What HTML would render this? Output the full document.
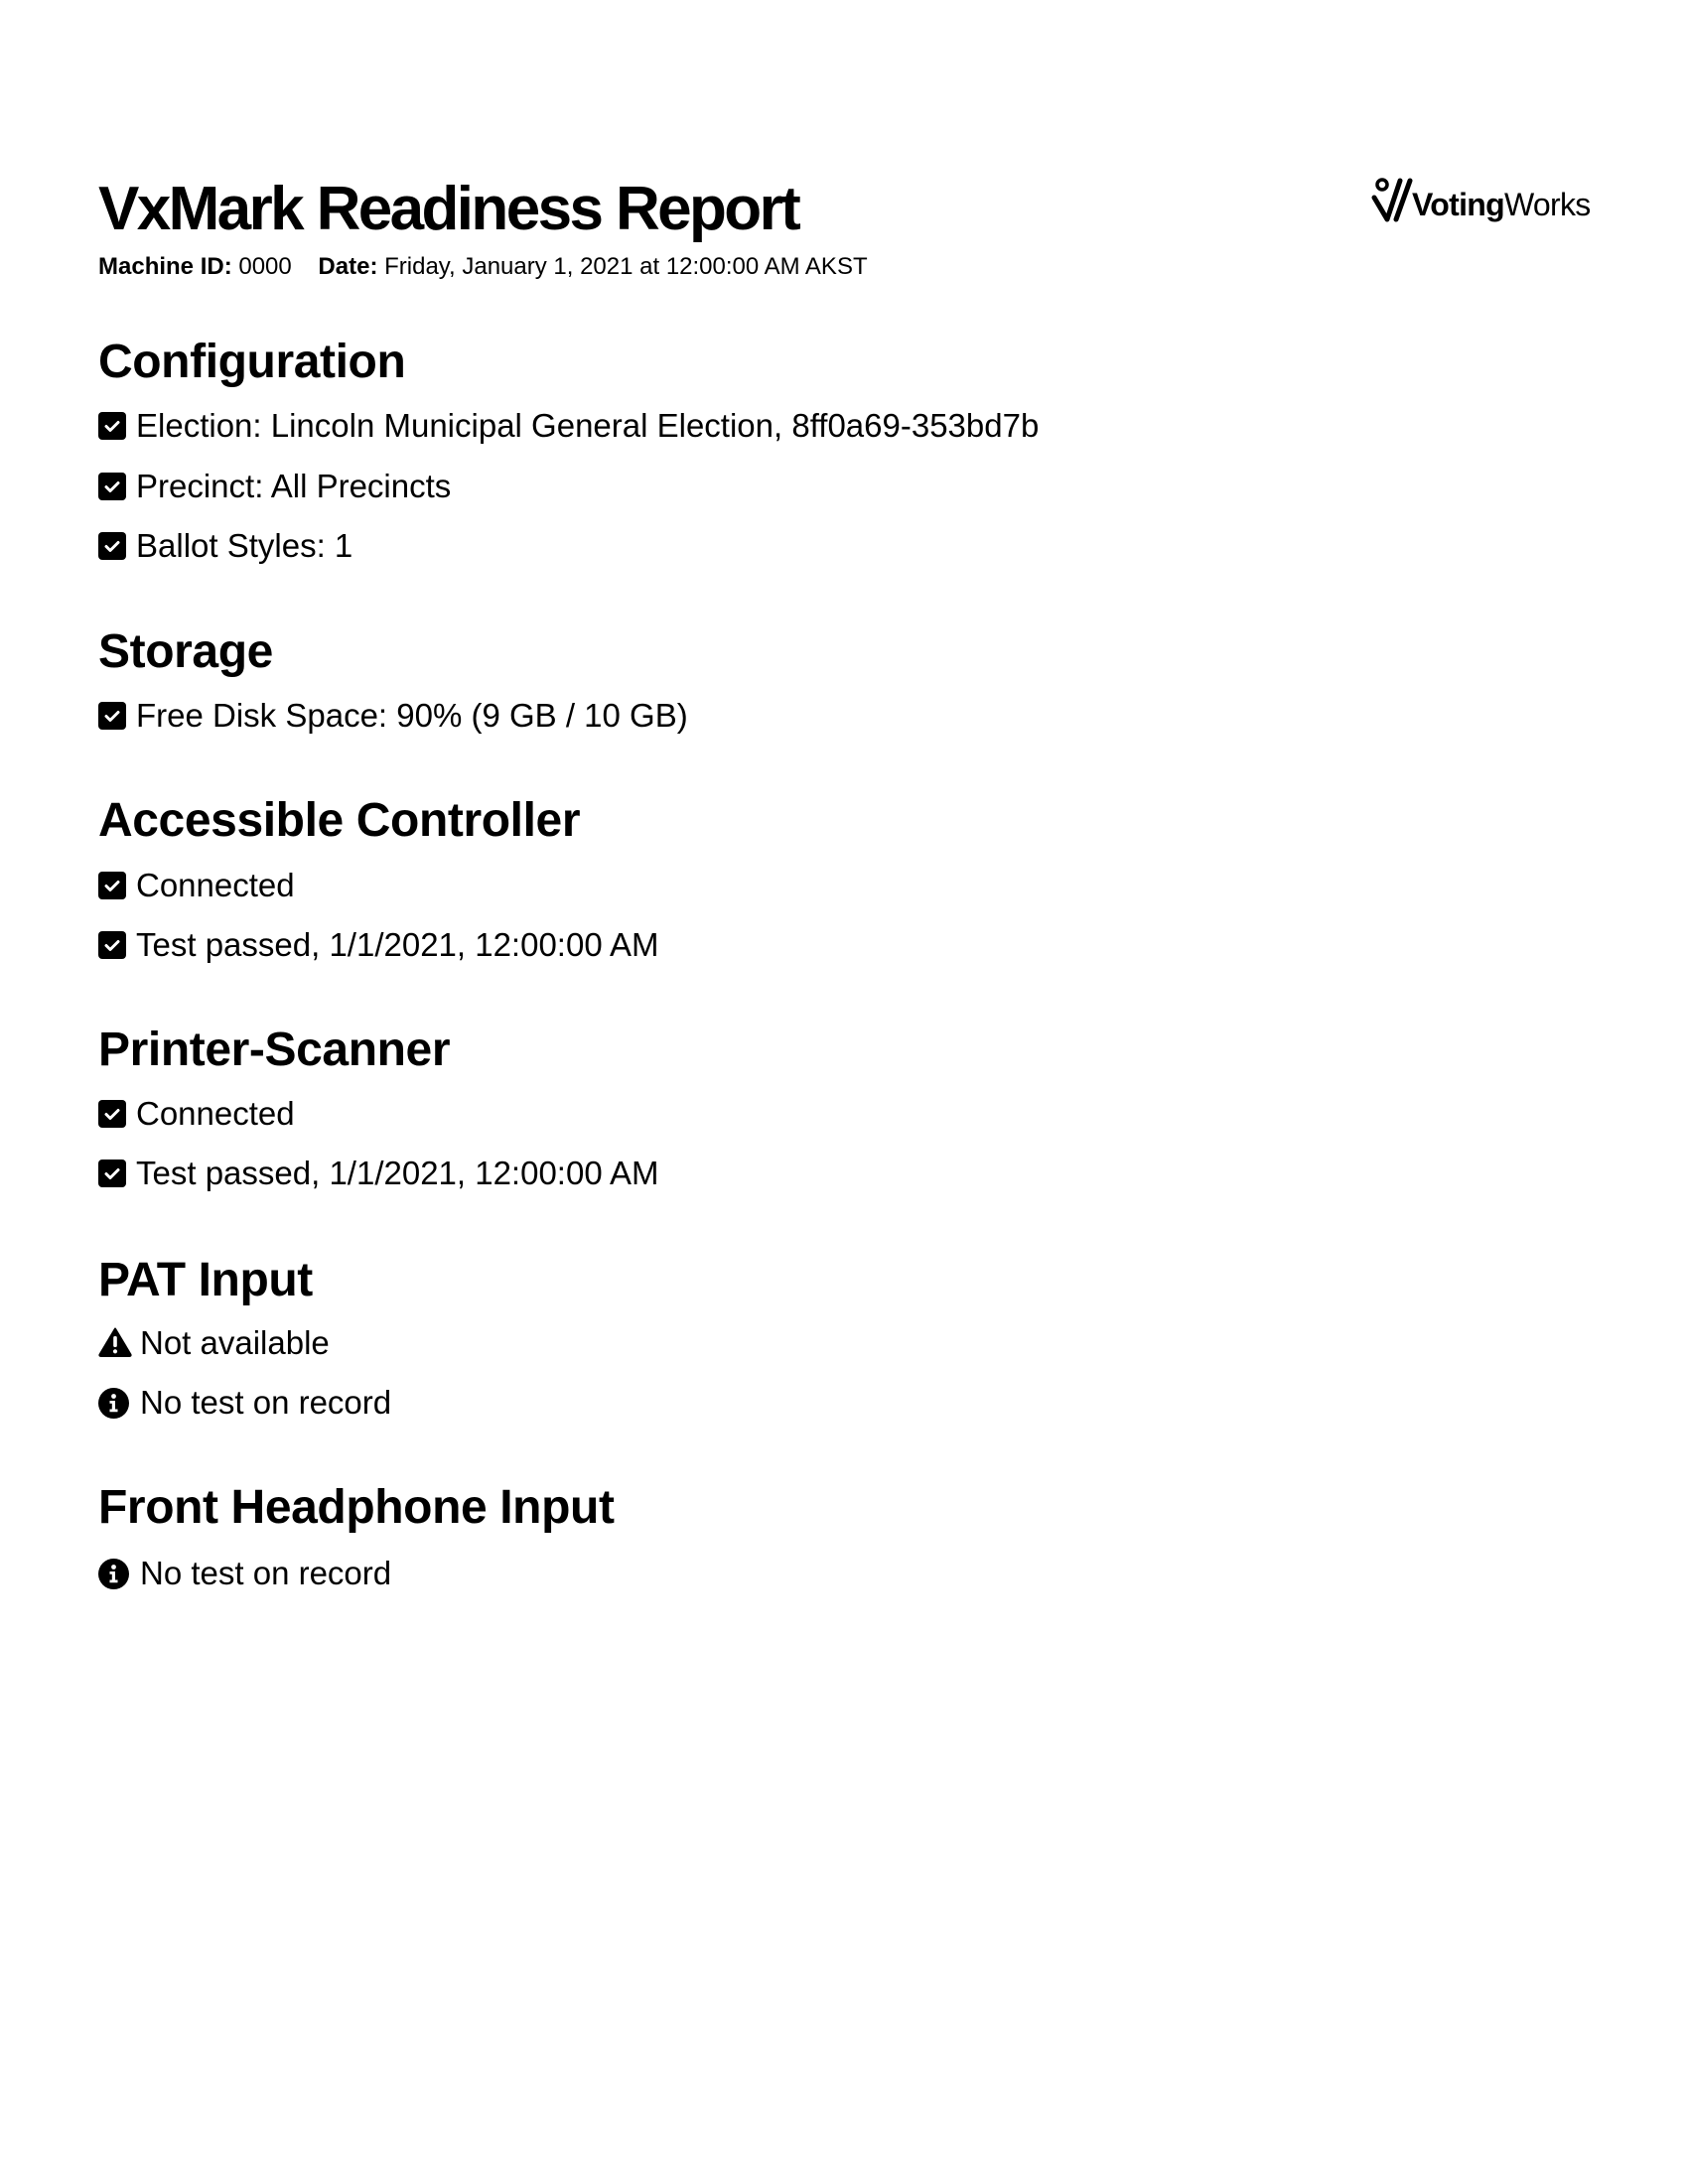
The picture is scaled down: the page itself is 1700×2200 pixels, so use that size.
<!DOCTYPE html>
<html><head><meta charset="utf-8"><style>
html,body{margin:0;padding:0;background:#fff;}
body{width:1700px;height:2200px;position:relative;font-family:"Liberation Sans",Arial,sans-serif;color:#000;overflow:hidden;}
.t{position:absolute;left:99px;line-height:1;white-space:nowrap;}
.h1{font-size:62px;font-weight:bold;letter-spacing:-2.6px;}
.meta{font-size:24px;}
.h2{font-size:48px;font-weight:bold;letter-spacing:-0.4px;}
.it{font-size:33px;left:137px;}
.ic{position:absolute;left:99px;}
</style></head><body>
<div class="t h1" style="top:180px">VxMark Readiness Report</div>
<div class="t meta" style="top:257px"><b>Machine ID:</b> 0000&nbsp;&nbsp;&nbsp;&nbsp;<b>Date:</b> Friday, January 1, 2021 at 12:00:00 AM AKST</div>

<svg style="position:absolute;left:1380px;top:177px" width="46" height="48" viewBox="0 0 46 48">
<circle cx="12" cy="9" r="5" fill="none" stroke="#000" stroke-width="3.5"/>
<path d="M4 22 L17 44 L30 5 M26 44 L40 5" fill="none" stroke="#000" stroke-width="5" stroke-linejoin="round" stroke-linecap="round"/>
</svg>
<div style="position:absolute;left:1422px;top:190px;font-size:32px;line-height:1;white-space:nowrap;letter-spacing:-0.7px"><b>Voting</b>Works</div>

<div class="t h2" style="top:341px">Configuration</div>
<svg class="ic" style="top:415px" width="28" height="28" viewBox="0 0 28 28"><rect width="28" height="28" rx="4"/><path d="M8 14.5l4 4 8-8" fill="none" stroke="#fff" stroke-width="3" stroke-linecap="round" stroke-linejoin="round"/></svg>
<div class="t it" style="top:412px">Election: Lincoln Municipal General Election, 8ff0a69-353bd7b</div>
<svg class="ic" style="top:476px" width="28" height="28" viewBox="0 0 28 28"><rect width="28" height="28" rx="4"/><path d="M8 14.5l4 4 8-8" fill="none" stroke="#fff" stroke-width="3" stroke-linecap="round" stroke-linejoin="round"/></svg>
<div class="t it" style="top:473px">Precinct: All Precincts</div>
<svg class="ic" style="top:536px" width="28" height="28" viewBox="0 0 28 28"><rect width="28" height="28" rx="4"/><path d="M8 14.5l4 4 8-8" fill="none" stroke="#fff" stroke-width="3" stroke-linecap="round" stroke-linejoin="round"/></svg>
<div class="t it" style="top:533px">Ballot Styles: 1</div>

<div class="t h2" style="top:633px">Storage</div>
<svg class="ic" style="top:707px" width="28" height="28" viewBox="0 0 28 28"><rect width="28" height="28" rx="4"/><path d="M8 14.5l4 4 8-8" fill="none" stroke="#fff" stroke-width="3" stroke-linecap="round" stroke-linejoin="round"/></svg>
<div class="t it" style="top:704px">Free Disk Space: 90% (9 GB / 10 GB)</div>

<div class="t h2" style="top:803px">Accessible Controller</div>
<svg class="ic" style="top:878px" width="28" height="28" viewBox="0 0 28 28"><rect width="28" height="28" rx="4"/><path d="M8 14.5l4 4 8-8" fill="none" stroke="#fff" stroke-width="3" stroke-linecap="round" stroke-linejoin="round"/></svg>
<div class="t it" style="top:875px">Connected</div>
<svg class="ic" style="top:938px" width="28" height="28" viewBox="0 0 28 28"><rect width="28" height="28" rx="4"/><path d="M8 14.5l4 4 8-8" fill="none" stroke="#fff" stroke-width="3" stroke-linecap="round" stroke-linejoin="round"/></svg>
<div class="t it" style="top:935px">Test passed, 1/1/2021, 12:00:00 AM</div>

<div class="t h2" style="top:1034px">Printer-Scanner</div>
<svg class="ic" style="top:1108px" width="28" height="28" viewBox="0 0 28 28"><rect width="28" height="28" rx="4"/><path d="M8 14.5l4 4 8-8" fill="none" stroke="#fff" stroke-width="3" stroke-linecap="round" stroke-linejoin="round"/></svg>
<div class="t it" style="top:1105px">Connected</div>
<svg class="ic" style="top:1168px" width="28" height="28" viewBox="0 0 28 28"><rect width="28" height="28" rx="4"/><path d="M8 14.5l4 4 8-8" fill="none" stroke="#fff" stroke-width="3" stroke-linecap="round" stroke-linejoin="round"/></svg>
<div class="t it" style="top:1165px">Test passed, 1/1/2021, 12:00:00 AM</div>

<div class="t h2" style="top:1266px">PAT Input</div>
<svg class="ic" style="top:1337px" width="34" height="30" viewBox="0 0 34 30"><path d="M17 1.5 L32.5 27.5 Q33 29 31 29 L3 29 Q1 29 1.5 27.5 Z" fill="#000" stroke="#000" stroke-width="2" stroke-linejoin="round"/><rect x="15.2" y="9" width="3.6" height="11" rx="1.5" fill="#fff"/><circle cx="17" cy="24.3" r="2.1" fill="#fff"/></svg>
<div class="t it" style="top:1336px;left:141px">Not available</div>
<svg class="ic" style="top:1398px" width="31" height="31" viewBox="0 0 31 31"><circle cx="15.5" cy="15.5" r="15.5"/><circle cx="15.5" cy="8.5" r="2.4" fill="#fff"/><path d="M11.5 13h5.5v8.5h2.5v2.8h-8v-2.8h2.3v-5.7h-2.3z" fill="#fff"/></svg>
<div class="t it" style="top:1396px;left:141px">No test on record</div>

<div class="t h2" style="top:1495px">Front Headphone Input</div>
<svg class="ic" style="top:1570px" width="31" height="31" viewBox="0 0 31 31"><circle cx="15.5" cy="15.5" r="15.5"/><circle cx="15.5" cy="8.5" r="2.4" fill="#fff"/><path d="M11.5 13h5.5v8.5h2.5v2.8h-8v-2.8h2.3v-5.7h-2.3z" fill="#fff"/></svg>
<div class="t it" style="top:1568px;left:141px">No test on record</div>
</body></html>
